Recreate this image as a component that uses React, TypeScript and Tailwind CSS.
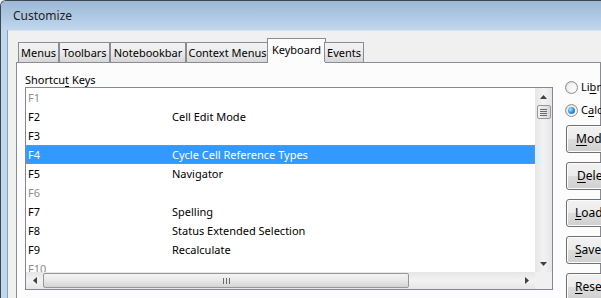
import React from 'react'

const tabs = [
  { label: 'Menus', w: 'w-[41px]' },
  { label: 'Toolbars', w: 'w-[51px]' },
  { label: 'Notebookbar', w: 'w-[76px]' },
  { label: 'Context Menus', w: 'w-[83px]' },
  { label: 'Keyboard', w: 'w-[59px]', active: true },
  { label: 'Events', w: 'w-[40px]' },
]

const rows = [
  { key: 'F1', cmd: '', dim: true },
  { key: 'F2', cmd: 'Cell Edit Mode' },
  { key: 'F3', cmd: '' },
  { key: 'F4', cmd: 'Cycle Cell Reference Types', selected: true },
  { key: 'F5', cmd: 'Navigator' },
  { key: 'F6', cmd: '', dim: true },
  { key: 'F7', cmd: 'Spelling' },
  { key: 'F8', cmd: 'Status Extended Selection' },
  { key: 'F9', cmd: 'Recalculate' },
  { key: 'F10', cmd: '', dim: true },
]

const buttons = [
  { u: 'M', rest: 'odify', pad: 'pl-[9px]' },
  { u: 'D', rest: 'elete', pad: 'pl-[10px]' },
  { u: 'L', rest: 'oad...', pad: 'pl-[8px]' },
  { u: 'S', rest: 'ave...', pad: 'pl-[8px]' },
  { u: 'R', rest: 'eset', pad: 'pl-[8px]' },
]

function Radio({ checked }: { checked?: boolean }) {
  return (
    <span className="relative w-[13px] h-[13px] rounded-full border border-[#8e8f8f] bg-gradient-to-br from-[#d4d4d4] to-[#fbfbfb] flex items-center justify-center shrink-0">
      <span className="w-[9px] h-[9px] rounded-full bg-gradient-to-br from-[#ececec] to-[#ffffff] flex items-center justify-center">
        {checked && (
          <span className="w-[7px] h-[7px] rounded-full bg-[radial-gradient(circle_at_35%_35%,#a9e1ff,#2d8ad9_55%,#1a5fa8)]" />
        )}
      </span>
    </span>
  )
}

function Arrow({ dir }: { dir: 'up' | 'down' | 'left' | 'right' }) {
  const pts = {
    up: '0,4 3.5,0 7,4',
    down: '0,0 7,0 3.5,4',
    left: '4,0 4,7 0,3.5',
    right: '0,0 0,7 4,3.5',
  }[dir]
  const vertical = dir === 'up' || dir === 'down'
  return (
    <svg width={vertical ? 7 : 4} height={vertical ? 4 : 7} viewBox={vertical ? '0 0 7 4' : '0 0 4 7'}>
      <polygon points={pts} fill="#404040" />
    </svg>
  )
}

export default function App() {
  return (
    <div className="w-[601px] h-[298px] overflow-hidden bg-[#f0f0f0] font-['Noto_Sans',sans-serif] text-[11px] text-black">
      <div className="h-full flex flex-col border-t border-l border-[#3e4650] rounded-tl-[6px] overflow-hidden">
        {/* title bar */}
        <div className="h-[29px] shrink-0 bg-gradient-to-b from-[#9cb8d7] to-[#c0d7ee] flex items-center pl-[12px]">
          <span className="text-[12px] text-[#1e1e1e]">Customize</span>
        </div>

        <div className="flex flex-1 min-h-0">
          {/* left window frame */}
          <div className="w-[6px] bg-[#c0d7ee] shrink-0" />
          <div className="w-px bg-[#8fa0b3] shrink-0" />

          {/* dialog content */}
          <div className="flex-1 min-w-0 flex flex-col pt-[7px] pl-[8px] border-t border-[#dde3ea]">
            {/* tabs */}
            <div className="flex items-end h-[24px] pl-[2px] relative z-10 whitespace-nowrap">
              {tabs.map((t) =>
                t.active ? (
                  <div
                    key={t.label}
                    className={`${t.w} h-[25px] -mx-[2px] -mb-px border border-b-0 border-[#898c95] bg-[#fcfcfc] flex items-start justify-center pt-[3px] leading-[16px] shrink-0`}
                  >
                    {t.label}
                  </div>
                ) : (
                  <div
                    key={t.label}
                    className={`${t.w} h-[20px] border border-b-0 border-[#898c95] bg-gradient-to-b from-[#f3f3f3] via-[#ebebeb] to-[#d6d6d6] flex items-center justify-center leading-[16px] shrink-0`}
                  >
                    {t.label}
                  </div>
                )
              )}
            </div>

            {/* tab panel */}
            <div className="flex-1 border border-[#898c95] bg-[#fcfcfc] flex pl-[8px] pt-[9px] gap-[12px]">
              <div className="w-[528px] shrink-0 flex flex-col">
                <div className="h-[15px] leading-[15px]">
                  Shortcu<span className="underline underline-offset-2">t</span> Keys
                </div>

                <div className="h-[203px] border border-[#828790] bg-white flex flex-col">
                  <div className="flex h-[184px]">
                    <div className="flex-1 overflow-hidden">
                      {rows.map((r) => (
                        <div
                          key={r.key}
                          className={`h-[19px] flex items-center leading-[17px] ${
                            r.selected
                              ? 'bg-[#3399ff] text-white border border-dotted border-[#d9822b]'
                              : r.dim
                              ? 'text-[#8c8c8c]'
                              : ''
                          }`}
                        >
                          <span className={`w-[146px] shrink-0 ${r.selected ? 'pl-[1px]' : 'pl-[2px]'}`}>{r.key}</span>
                          <span className={r.selected ? '-ml-px' : ''}>{r.cmd}</span>
                        </div>
                      ))}
                    </div>

                    {/* vertical scrollbar */}
                    <div className="w-[17px] shrink-0 bg-gradient-to-r from-[#e6e6e6] via-[#f2f2f2] to-[#e6e6e6] flex flex-col items-center">
                      <div className="h-[17px] w-full flex items-center justify-center">
                        <Arrow dir="up" />
                      </div>
                      <div className="w-[14px] h-[14px] rounded-[2px] border border-[#979797] bg-gradient-to-r from-[#f2f2f2] to-[#d8d8d8] flex flex-col items-center justify-center gap-[1px]">
                        <span className="w-[7px] h-px bg-[#6a6a6a]" />
                        <span className="w-[7px] h-px bg-[#6a6a6a]" />
                        <span className="w-[7px] h-px bg-[#6a6a6a]" />
                        <span className="w-[7px] h-px bg-[#6a6a6a]" />
                      </div>
                      <div className="flex-1" />
                      <div className="h-[17px] w-full flex items-center justify-center">
                        <Arrow dir="down" />
                      </div>
                    </div>
                  </div>

                  {/* horizontal scrollbar */}
                  <div className="flex h-[17px]">
                    <div className="flex-1 bg-gradient-to-b from-[#e6e6e6] via-[#f2f2f2] to-[#e6e6e6] flex items-center">
                      <div className="w-[17px] h-full flex items-center justify-center">
                        <Arrow dir="left" />
                      </div>
                      <div className="w-[366px] h-[15px] rounded-[2px] border border-[#979797] bg-gradient-to-b from-[#f4f4f4] via-[#e8e8e8] to-[#d4d4d4] flex items-center justify-center gap-[2px]">
                        <span className="w-px h-[6px] bg-[#6a6a6a]" />
                        <span className="w-px h-[6px] bg-[#6a6a6a]" />
                        <span className="w-px h-[6px] bg-[#6a6a6a]" />
                      </div>
                      <div className="flex-1" />
                      <div className="w-[17px] h-full flex items-center justify-center">
                        <Arrow dir="right" />
                      </div>
                    </div>
                    <div className="w-[17px] bg-[#f0f0f0]" />
                  </div>
                </div>
              </div>

              {/* right column */}
              <div className="flex-1 flex flex-col pt-[8px] whitespace-nowrap">
                <div className="h-[15px] flex items-center gap-[3px]">
                  <Radio />
                  <span>
                    Li<span className="underline underline-offset-2">b</span>reOffice
                  </span>
                </div>
                <div className="h-[15px] mt-[8px] flex items-center gap-[3px]">
                  <Radio checked />
                  <span>
                    C<span className="underline underline-offset-2">a</span>lc
                  </span>
                </div>
                <div className="flex flex-col gap-[9px] mt-[7px] pl-px">
                  {buttons.map((b) => (
                    <div
                      key={b.u}
                      className={`w-[80px] h-[28px] rounded-[3px] border border-[#707070] bg-[linear-gradient(#f2f2f2,#ebebeb_50%,#dddddd_50%,#cfcfcf)] shadow-[inset_0_0_0_1px_#fcfcfc] flex items-center text-[12px] ${b.pad}`}
                    >
                      <span className="underline underline-offset-2">{b.u}</span>
                      {b.rest}
                    </div>
                  ))}
                </div>
              </div>
            </div>
          </div>
        </div>
      </div>
    </div>
  )
}
